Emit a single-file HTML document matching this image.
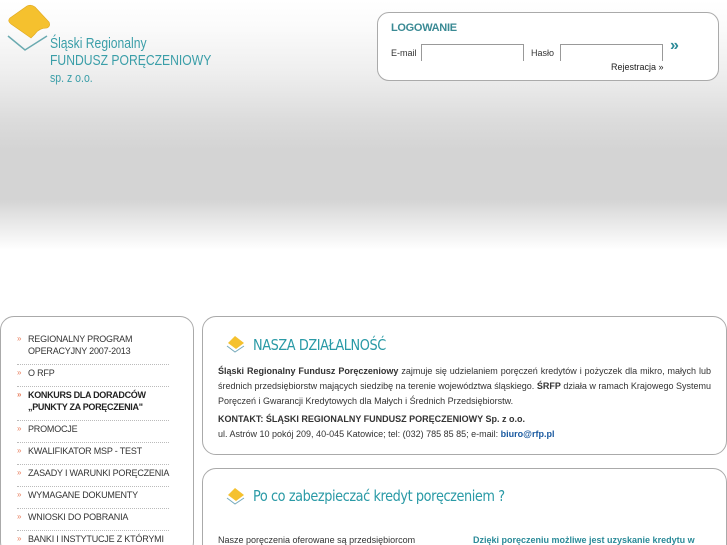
<!DOCTYPE html>
<html><head><meta charset="utf-8"><style>
*{margin:0;padding:0;box-sizing:border-box}
html,body{width:727px;height:545px;overflow:hidden}
body{position:relative;font-family:"Liberation Sans",sans-serif;background:#fff}
.bg{position:absolute;left:0;top:0;width:727px;height:255px;background:linear-gradient(#fff 0px,#fafafa 30px,#efefef 70px,#e6e6e6 95px,#dcdcdc 120px,#d4d4d4 150px,#d4d4d4 200px,#e2e2e2 215px,#f0f0f0 232px,#fff 250px)}
.logo{position:absolute;left:50px;top:35px;color:#3a9ea8;font-size:15px;line-height:17px;transform:scaleX(0.81);transform-origin:0 0;white-space:nowrap}
.login{position:absolute;left:377px;top:12px;width:342px;height:69px;border:1px solid #aaa;border-radius:12px;background:#fff}
.login .t{position:absolute;left:13px;top:9px;font-size:11px;color:#3a8a94;font-weight:bold;letter-spacing:-0.3px}
.login label{position:absolute;font-size:9px;color:#333;top:35px}
.login .in{position:absolute;top:31px;width:103px;height:17px;border:1px solid #999;border-bottom:none;background:#fff}
.box{position:absolute;border:1px solid #aaa;border-radius:14px;background:#fff;overflow:hidden}
.menu{left:0;top:316px;width:194px;height:240px}
.menu ul{list-style:none;position:absolute;left:16px;top:16px;width:152px}
.menu li{font-size:9px;color:#333;line-height:12px;padding:0 0 7px 11px;margin-bottom:2px;position:relative;border-bottom:1px dotted #bbb;letter-spacing:-0.2px;white-space:nowrap}
.menu li:before{content:"»";position:absolute;left:0;color:#e88060;font-size:8px}
.menu li.b{font-weight:bold;color:#222;letter-spacing:-0.3px}
h2{position:absolute;font-family:"DejaVu Sans",sans-serif;font-weight:normal;color:#2a9aa6;font-size:15px;letter-spacing:-0.5px;transform-origin:0 0;white-space:nowrap}
.p{position:absolute;font-size:9px;color:#333;line-height:15px}
.dia{position:absolute}
</style></head><body>
<div class="bg"></div>
<svg class="dia" style="left:5px;top:4px" width="50" height="48" viewBox="0 0 50 48">
<path d="M3 32 L20 46 L42 32" fill="none" stroke="#6aaab0" stroke-width="1.5"/>
<path d="M22 2 Q26 0 30 3 L44 18 Q46 22 42 24 Q34 24 30 30 L26 34 L6 20 Q2 17 5 14 Z" fill="#f5c12e" stroke="#e0a820" stroke-width="0.6"/>
</svg>
<div class="logo">Śląski Regionalny<br>FUNDUSZ PORĘCZENIOWY<br><span style="font-size:13px">sp. z o.o.</span></div>
<div class="login">
<div class="t">LOGOWANIE</div>
<label style="left:13px">E-mail</label><div class="in" style="left:43px"></div>
<label style="left:153px">Hasło</label><div class="in" style="left:182px"></div>
<div style="position:absolute;left:292px;top:24px;color:#2a8a98;font-size:16px;font-weight:bold">»</div>
<div style="position:absolute;left:233px;top:49px;font-size:9px;color:#222">Rejestracja »</div>
</div>
<div class="box menu"><ul>
<li>REGIONALNY PROGRAM<br>OPERACYJNY 2007-2013</li>
<li>O RFP</li>
<li class="b">KONKURS DLA DORADCÓW<br>„PUNKTY ZA PORĘCZENIA"</li>
<li>PROMOCJE</li>
<li>KWALIFIKATOR MSP - TEST</li>
<li>ZASADY I WARUNKI PORĘCZENIA</li>
<li>WYMAGANE DOKUMENTY</li>
<li>WNIOSKI DO POBRANIA</li>
<li>BANKI I INSTYTUCJE Z KTÓRYMI</li>
</ul></div>
<div class="box" style="left:202px;top:316px;width:525px;height:139px"></div>
<svg class="dia" style="left:226px;top:335px" width="20" height="18" viewBox="0 0 20 18"><path d="M1 11 L9 17 L18 11" fill="none" stroke="#7ab" stroke-width="1"/><path d="M9 1 L18 8 L10 14 L2 8 Z" fill="#f5c12e"/></svg>
<h2 style="left:253px;top:336px;transform:scaleX(0.86)">NASZA DZIAŁALNOŚĆ</h2>
<div class="p" style="left:218px;top:364px;width:493px;text-align:justify"><b>Śląski Regionalny Fundusz Poręczeniowy</b> zajmuje się udzielaniem poręczeń kredytów i pożyczek dla mikro, małych lub średnich przedsiębiorstw mających siedzibę na terenie województwa śląskiego. <b>ŚRFP</b> działa w ramach Krajowego Systemu Poręczeń i Gwarancji Kredytowych dla Małych i Średnich Przedsiębiorstw.</div>
<div class="p" style="left:218px;top:412px"><b>KONTAKT: ŚLĄSKI REGIONALNY FUNDUSZ PORĘCZENIOWY Sp. z o.o.</b><br>ul. Astrów 10 pokój 209, 40-045 Katowice; tel: (032) 785 85 85; e-mail: <b style="color:#1a5aa0">biuro@rfp.pl</b></div>
<div class="box" style="left:202px;top:468px;width:525px;height:100px"></div>
<svg class="dia" style="left:226px;top:487px" width="20" height="18" viewBox="0 0 20 18"><path d="M1 11 L9 17 L18 11" fill="none" stroke="#7ab" stroke-width="1"/><path d="M9 1 L18 8 L10 14 L2 8 Z" fill="#f5c12e"/></svg>
<h2 style="left:253px;top:487px;transform:scaleX(0.86)">Po co zabezpieczać kredyt poręczeniem ?</h2>
<div class="p" style="left:218px;top:533px">Nasze poręczenia oferowane są przedsiębiorcom</div>
<div class="p" style="left:473px;top:533px;color:#2a8a98;font-weight:bold">Dzięki poręczeniu możliwe jest uzyskanie kredytu w</div>
</body></html>
